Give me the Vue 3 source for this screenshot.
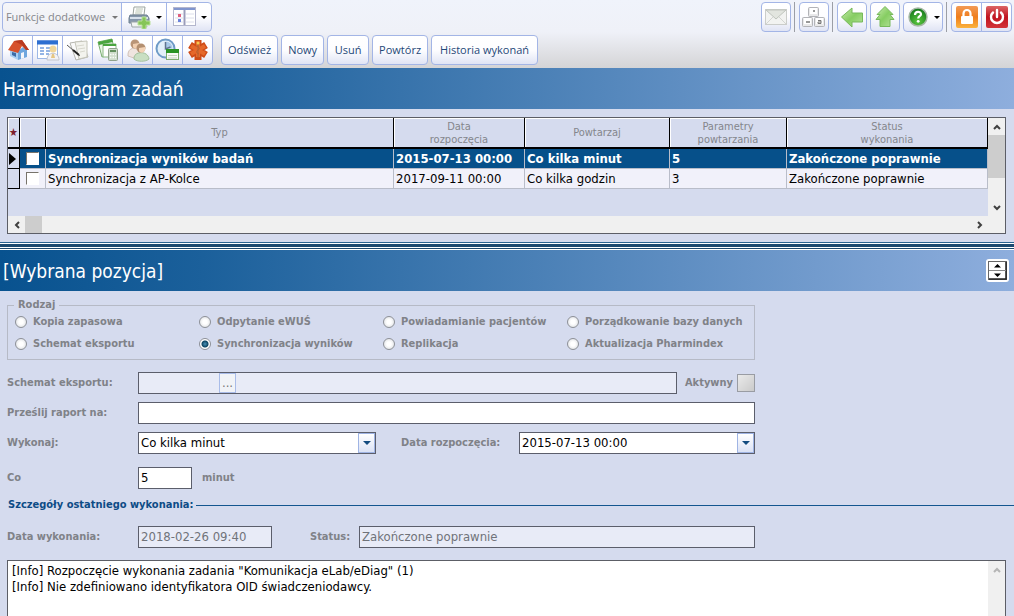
<script setup>
import { ref } from 'vue'

const actions = ['Odśwież', 'Nowy', 'Usuń', 'Powtórz', 'Historia wykonań']

const tasks = ref([
  { type: 'Synchronizacja wyników badań', start: '2015-07-13 00:00', repeat: 'Co kilka minut', params: '5', status: 'Zakończone poprawnie', checked: false },
  { type: 'Synchronizacja z AP-Kolce', start: '2017-09-11 00:00', repeat: 'Co kilka godzin', params: '3', status: 'Zakończone poprawnie', checked: false },
])
const current = ref(0)

const kinds = [
  'Kopia zapasowa', 'Odpytanie eWUŚ', 'Powiadamianie pacjentów', 'Porządkowanie bazy danych',
  'Schemat eksportu', 'Synchronizacja wyników', 'Replikacja', 'Aktualizacja Pharmindex',
]
const kind = ref('Synchronizacja wyników')

const scheme = ref('')
const schemeName = ref('')
const active = ref(false)
const report = ref('')
const interval = ref('Co kilka minut')
const startDate = ref('2015-07-13 00:00')
const every = ref('5')
const runDate = ref('2018-02-26 09:40')
const runStatus = ref('Zakończone poprawnie')
const log = ref('[Info] Rozpoczęcie wykonania zadania "Komunikacja eLab/eDiag" (1)\n[Info] Nie zdefiniowano identyfikatora OID świadczeniodawcy.')
</script>

<template>
  <div class="app">
    <header class="toolbar">
      <div class="bar">
        <div class="group">
          <button class="tool extra" type="button">Funkcje dodatkowe <i class="caret dim"></i></button>
          <button class="tool split" type="button" aria-label="Drukuj">
            <svg width="24" height="24" viewBox="0 0 24 24">
              <path d="M7 2h11l-1 8H6z" fill="#fff" stroke="#9aa39d" />
              <path d="M9 4h7M8.500 6h7M8 8h7" stroke="#b9c4b2" />
              <path d="M3 10h17l2 3v5H2v-5z" fill="#8798ab" stroke="#6f8092" />
              <path d="M3 13h18" stroke="#d8e1ec" stroke-width="2" />
              <path d="M4 17h14l2 5H5z" fill="#f2f4f3" stroke="#9ba5a8" />
              <path d="M15 12h4v4h4v4h-4v4h-4v-4h-4v-4h4z" fill="#86c559" stroke="#b9e29a" />
            </svg>
            <i class="caret"></i>
          </button>
          <button class="tool split" type="button" aria-label="Układ okna">
            <svg width="24" height="24" viewBox="0 0 24 24">
              <rect x="1.500" y="2.500" width="22" height="18" fill="#fff" stroke="#b3b6cd" />
              <path d="M2 4h21" stroke="#8095ce" stroke-width="2" />
              <path d="M12.500 5v15" stroke="#9a9cba" stroke-width="2" />
              <path d="M3 9h8M3 13h8M3 17h8M14 9h8M14 13h8M14 17h8" stroke="#dcdeeb" />
              <rect x="6" y="9" width="3" height="3" fill="#e0607e" />
              <rect x="6" y="14" width="3" height="3" fill="#6b83dc" />
            </svg>
            <i class="caret"></i>
          </button>
        </div>
        <div class="right">
          <button class="tool single" type="button" aria-label="Wiadomości">
            <svg width="24" height="24" viewBox="0 0 24 24">
              <rect x="1.500" y="4.500" width="21" height="15" fill="#f2f3f1" stroke="#cbcdca" />
              <path d="M2 19l7-7M22 19l-7-7" stroke="#d3d5d1" />
              <path d="M2 5l10 9L22 5z" fill="#e2e5df" stroke="#bfc4bd" />
            </svg>
          </button>
          <i class="sep"></i>
          <button class="tool single" type="button" aria-label="Klawiatura">
            <svg width="26" height="24" viewBox="0 0 26 24">
              <g fill="#e9e9ea" stroke="#b2b3b7">
                <rect x="7.500" y="2.500" width="10" height="9" rx="1" />
                <rect x="1.500" y="12.500" width="10" height="9" rx="1" />
                <rect x="13.500" y="12.500" width="10" height="9" rx="1" />
              </g>
              <g fill="#fff"><rect x="9" y="3" width="7" height="6" /><rect x="3" y="13" width="7" height="6" /><rect x="15" y="13" width="7" height="6" /></g>
              <path d="M12 6h2M5 17h4" stroke="#777" stroke-width="1.500" />
              <path d="M17 15.500h3v3h-3v-1.500h3" fill="none" stroke="#777" />
            </svg>
          </button>
          <i class="sep"></i>
          <button class="tool single gap" type="button" aria-label="Wstecz">
            <svg width="24" height="24" viewBox="0 0 24 24">
              <defs><linearGradient id="leaf" x1="0" y1="0" x2="1" y2="1"><stop offset="0" stop-color="#c9ecb0" /><stop offset=".5" stop-color="#86cd62" /><stop offset="1" stop-color="#b6e39b" /></linearGradient></defs>
              <path d="M1.500 12L12 3v5h10.500v9H12v5z" fill="url(#leaf)" stroke="#77b95b" />
            </svg>
          </button>
          <button class="tool single gap" type="button" aria-label="W górę">
            <svg width="24" height="24" viewBox="0 0 24 24">
              <path d="M12 1.500L20 9.500h-3l4 5h-4v7H7v-7H3l4-5H4z" fill="url(#leaf)" stroke="#77b95b" />
            </svg>
          </button>
          <button class="tool help" type="button" aria-label="Pomoc">
            <svg width="22" height="24" viewBox="0 0 22 24">
              <defs><radialGradient id="ball" cx=".5" cy=".75" r=".7"><stop offset="0" stop-color="#5cc83f" /><stop offset="1" stop-color="#167a1c" /></radialGradient></defs>
              <circle cx="11" cy="12" r="9" fill="url(#ball)" stroke="#a7b8a6" stroke-width="1.500" />
              <path d="M8 10c0-4 6-4 6-.8 0 2-2.800 2.100-2.800 4.300" fill="none" stroke="#fff" stroke-width="2.200" />
              <circle cx="11.200" cy="16.300" r="1.400" fill="#fff" />
            </svg>
            <i class="caret"></i>
          </button>
          <i class="sep"></i>
          <div class="group">
            <button class="tool cell" type="button" aria-label="Zablokuj">
              <svg width="24" height="24" viewBox="0 0 24 24">
                <defs><linearGradient id="amber" x1="0" y1="0" x2="0" y2="1"><stop offset="0" stop-color="#f29a55" /><stop offset=".5" stop-color="#ef7d1c" /><stop offset="1" stop-color="#fbb33e" /></linearGradient></defs>
                <rect x="1" y="1" width="22" height="22" rx="2" fill="url(#amber)" />
                <path d="M8.500 11V8.500a3.500 3.500 0 0 1 7 0V11" fill="none" stroke="#fff" stroke-width="2.200" />
                <rect x="6" y="11" width="12" height="8" rx="1" fill="#fff" />
              </svg>
            </button>
            <button class="tool cell" type="button" aria-label="Zakończ">
              <svg width="24" height="24" viewBox="0 0 24 24">
                <defs><linearGradient id="ruby" x1="0" y1="0" x2="0" y2="1"><stop offset="0" stop-color="#dc6565" /><stop offset=".5" stop-color="#c01420" /><stop offset="1" stop-color="#d3343a" /></linearGradient></defs>
                <rect x="1" y="1" width="22" height="22" rx="2" fill="url(#ruby)" />
                <path d="M8 7.500a6 6 0 1 0 8 0" fill="none" stroke="#fff" stroke-width="2.400" stroke-linecap="round" />
                <path d="M12 5v7" stroke="#fff" stroke-width="2.400" stroke-linecap="round" />
              </svg>
            </button>
          </div>
        </div>
      </div>

      <div class="bar">
        <div class="group">
          <button class="tool cell" type="button" aria-label="Start">
            <svg width="24" height="24" viewBox="0 0 24 24">
              <path d="M4 11l8 2v9l-8-4z" fill="#a8cff3" />
              <path d="M12 13l5-4 4 3v7l-9 3z" fill="#6ea6de" />
              <path d="M15 15l3-1v6l-3 1z" fill="#f4f6fb" />
              <path d="M6 14l4 1v4l-4-2z" fill="#3c6ba8" />
              <path d="M8 3l8-1 7 10h-3l-4-4-4 7L2 12z" fill="#d6512c" />
              <path d="M8 3l8-1 7 10h-3l-4-5z" fill="#b93a20" />
            </svg>
          </button>
          <button class="tool cell" type="button" aria-label="Terminarz">
            <svg width="24" height="24" viewBox="0 0 24 24">
              <rect x="1.500" y="2.500" width="20" height="18" fill="#fff" stroke="#9db8e6" />
              <path d="M1 4.500h21" stroke="#2d6fd1" stroke-width="4" />
              <path d="M4 10h4M10 10h4M4 13h4M10 13h4M4 16h4M10 16h3" stroke="#739ddd" stroke-width="1.500" />
              <circle cx="17" cy="11" r="3.500" fill="#f0d69a" />
              <path d="M11 22c0-9 12-9 12 0z" fill="#f2f2f5" stroke="#c3c5cc" />
              <path d="M16 16h2l1 4h-4z" fill="#e6c683" />
            </svg>
          </button>
          <button class="tool cell" type="button" aria-label="Notatki">
            <svg width="24" height="24" viewBox="0 0 24 24">
              <path d="M4 5l12-2 6 16-12 3z" fill="#fafafa" stroke="#b5b5ae" />
              <path d="M9 4l12-1v16l-8 2z" fill="#f3f3ee" stroke="#c4c4b9" />
              <path d="M11 8l7-1M12 11l7-1M14 14l5-1" stroke="#d7d7cd" />
              <path d="M1 7l13 11" stroke="#555" />
              <path d="M7 12l6 5" stroke="#222" stroke-width="2" fill="none" />
            </svg>
          </button>
          <button class="tool cell" type="button" aria-label="Rozliczenia">
            <svg width="24" height="24" viewBox="0 0 24 24">
              <path d="M2 4l14-3 3 15-13 3z" fill="#eaf5e6" stroke="#79ad70" />
              <path d="M2 4l14-3 1 3-14 3z" fill="#4aa53f" />
              <path d="M7 6h13v13H7z" fill="#fff" stroke="#88b981" />
              <path d="M7 7h13" stroke="#4aa53f" stroke-width="2" />
              <rect x="12.500" y="10.500" width="9" height="12" rx="1" fill="#cfdccb" stroke="#8fa18a" />
              <path d="M14 13h6" stroke="#638f5d" stroke-width="2" />
              <path d="M14 16.500h6M14 19.500h6" stroke="#f8fbf7" stroke-width="1.500" stroke-dasharray="1.500 1" />
            </svg>
          </button>
          <button class="tool cell" type="button" aria-label="Pacjenci">
            <svg width="24" height="24" viewBox="0 0 24 24">
              <path d="M2 18c-1-10 11-10 12-2l-3 5z" fill="#efe5df" stroke="#d1c2ba" />
              <path d="M8 21c-1-8 14-9 15 0-3 3-12 3-15 0z" fill="#c9dfc3" stroke="#a3c09c" />
              <circle cx="9" cy="6" r="4.500" fill="#b99577" />
              <path d="M7 6l6-1c1 6-4 7-6 4z" fill="#f1cfb0" />
              <circle cx="15" cy="10" r="4.500" fill="#b38f70" />
              <path d="M13 10l6-1c1 6-4 7-6 4z" fill="#f3d3b6" />
            </svg>
          </button>
          <button class="tool cell" type="button" aria-label="Harmonogram">
            <svg width="26" height="24" viewBox="0 0 26 24">
              <circle cx="10.500" cy="10.500" r="9" fill="#e2eff9" stroke="#6f9bc7" stroke-width="2" />
              <path d="M10.500 10.500V3.500a7 7 0 0 1 7 7z" fill="#a9c9e9" />
              <path d="M10.500 4v7l5-2" fill="none" stroke="#60748e" stroke-width="1.500" />
              <rect x="11.500" y="11.500" width="12" height="10" fill="#f7faf5" stroke="#7eac71" />
              <path d="M11 13h13" stroke="#299324" stroke-width="4" />
              <path d="M13 17.500h9M13 20h9" stroke="#c6d1c2" />
            </svg>
          </button>
          <button class="tool cell" type="button" aria-label="Ratownictwo">
            <svg width="24" height="24" viewBox="0 0 24 24">
              <g stroke="#cf4b16" stroke-width="7"><path d="M12 2v20M4 7l16 10M20 7L4 17" /></g>
              <g stroke="#e5682a" stroke-width="4"><path d="M12 3v16M5 8l14 8M19 8L5 16" /></g>
              <path d="M12 5v15M10 8c4 1 4 3 2 4s-2 3 1 4" fill="none" stroke="#b5602f" />
              <circle cx="12" cy="5" r="1.500" fill="#f7c64d" />
            </svg>
          </button>
        </div>
        <nav class="actions">
          <button v-for="a in actions" :key="a" class="tool action" type="button">{{ a }}</button>
        </nav>
      </div>
    </header>

    <h1 class="title">Harmonogram zadań</h1>

    <section class="list">
      <div class="frame">
        <div class="pane">
          <div class="viewport">
            <table class="grid">
              <colgroup>
                <col class="c-mark"><col class="c-check"><col><col class="c-date"><col class="c-repeat"><col class="c-param"><col class="c-status">
              </colgroup>
              <thead>
                <tr>
                  <th class="star">★</th>
                  <th></th>
                  <th>Typ</th>
                  <th>Data<br>rozpoczęcia</th>
                  <th>Powtarzaj</th>
                  <th>Parametry<br>powtarzania</th>
                  <th>Status<br>wykonania</th>
                </tr>
              </thead>
              <tbody>
                <tr v-for="(t, i) in tasks" :key="t.type" :class="{ selected: i === current }" @click="current = i">
                  <td class="mark"><i v-if="i === current" class="pointer"></i></td>
                  <td class="pick"><input v-model="t.checked" type="checkbox" :aria-label="t.type"></td>
                  <td>{{ t.type }}</td>
                  <td>{{ t.start }}</td>
                  <td>{{ t.repeat }}</td>
                  <td>{{ t.params }}</td>
                  <td>{{ t.status }}</td>
                </tr>
              </tbody>
            </table>
          </div>
          <div class="vscroll">
            <button type="button" aria-label="Przewiń w górę"><svg width="8" height="6" viewBox="0 0 8 6"><path d="M1 5l3-3 3 3" /></svg></button>
            <span class="thumb"></span>
            <button type="button" aria-label="Przewiń w dół"><svg width="8" height="6" viewBox="0 0 8 6"><path d="M1 1l3 3 3-3" /></svg></button>
          </div>
        </div>
        <div class="hscroll">
          <button type="button" aria-label="Przewiń w lewo"><svg width="6" height="8" viewBox="0 0 6 8"><path d="M5 1L2 4l3 3" /></svg></button>
          <span class="thumb"></span>
          <button type="button" aria-label="Przewiń w prawo"><svg width="6" height="8" viewBox="0 0 6 8"><path d="M1 1l3 3-3 3" /></svg></button>
        </div>
      </div>
    </section>

    <div class="splitter"></div>

    <div class="title">
      <h2>[Wybrana pozycja]</h2>
      <button class="resize" type="button" aria-label="Zmień wysokość panelu">
        <svg width="19" height="19" viewBox="0 0 19 19">
          <rect x=".5" y=".5" width="18" height="18" fill="#fff" stroke="#666" />
          <path d="M1 18h17V1" fill="none" stroke="#222" stroke-width="1.500" />
          <path d="M1 9.500h17" stroke="#888" />
          <path d="M6 6.500l3.500-3.500L13 6.500zM6 12.500l3.500 3.500 3.500-3.500z" fill="#000" />
        </svg>
      </button>
    </div>

    <form class="details" @submit.prevent>
      <div class="fields">
        <fieldset class="kinds">
          <legend>Rodzaj</legend>
          <label v-for="k in kinds" :key="k"><input v-model="kind" type="radio" name="kind" :value="k">{{ k }}</label>
        </fieldset>

        <div class="row">
          <label class="name" for="scheme">Schemat eksportu:</label>
          <div class="box shaded grow">
            <input id="scheme" v-model="scheme" class="code" type="text">
            <button class="more" type="button" aria-label="Wybierz schemat">...</button>
            <input v-model="schemeName" class="grow" type="text" aria-label="Nazwa schematu" readonly>
          </div>
          <label class="active" for="active">Aktywny</label>
          <input id="active" v-model="active" class="toggle" type="checkbox">
        </div>

        <div class="row">
          <label class="name" for="report">Prześlij raport na:</label>
          <div class="box grow"><input id="report" v-model="report" class="grow" type="text"></div>
        </div>

        <div class="row">
          <label class="name" for="interval">Wykonaj:</label>
          <div class="box combo">
            <select id="interval" v-model="interval" class="grow">
              <option>Co kilka minut</option>
              <option>Co kilka godzin</option>
            </select>
            <span class="arrow"></span>
          </div>
          <label class="start" for="start">Data rozpoczęcia:</label>
          <div class="box grow">
            <input id="start" v-model="startDate" class="grow" type="text">
            <button class="arrow" type="button" aria-label="Wybierz datę"></button>
          </div>
        </div>

        <div class="row every">
          <label class="name" for="every">Co</label>
          <div class="box short"><input id="every" v-model="every" class="grow" type="text"></div>
          <span class="unit">minut</span>
        </div>
      </div>

      <h3 class="section">Szczegóły ostatniego wykonania:</h3>

      <div class="fields">
        <div class="row last">
          <label class="name" for="run">Data wykonania:</label>
          <div class="box shaded date"><input id="run" v-model="runDate" class="grow" type="text" readonly></div>
          <label class="state" for="state">Status:</label>
          <div class="box shaded grow"><input id="state" v-model="runStatus" class="grow" type="text" readonly></div>
        </div>
      </div>

      <div class="log">
        <textarea v-model="log" aria-label="Dziennik wykonania" readonly></textarea>
        <div class="vscroll idle">
          <button type="button" aria-label="Przewiń dziennik w górę"><svg width="8" height="6" viewBox="0 0 8 6"><path d="M1 5l3-3 3 3" /></svg></button>
        </div>
      </div>
    </form>
  </div>
</template>

<style>
body { margin: 0; }
</style>

<style scoped>
* { box-sizing: border-box; }
.app {
  display: flex;
  flex-direction: column;
  height: 100vh;
  overflow: hidden;
  background: #d5dbee;
  color: #000;
  font: 13px/16px "DejaVu Sans Condensed", "DejaVu Sans", sans-serif;
}
button, input, select, textarea { font: inherit; color: inherit; margin: 0; }
button { padding: 0; }
svg { display: block; flex: none; }

.toolbar {
  display: flex;
  flex-direction: column;
  flex: none;
  gap: 3px;
  padding: 2px 2px 3px 2px;
  background: linear-gradient(#f0f3fb 0, #eff1f8 32px, #d4d4d6 100%);
  font: 11px/16px "Open Sans", "Noto Sans", sans-serif;
}
.bar { display: flex; }
.right { display: flex; margin-left: auto; }
.group { display: flex; }
.tool {
  display: flex;
  align-items: center;
  justify-content: center;
  height: 30px;
  border: 1px solid #a3b5e6;
  border-radius: 4px;
  background: linear-gradient(#fff 0, #fdfdff 50%, #e0e4f4 100%);
  color: #1f4878;
}
.group .tool { border-radius: 0; width: 46px; margin-right: -1px; }
.group .tool.cell { width: 31px; }
.group .tool:first-child { border-radius: 4px 0 0 4px; }
.group .tool:last-child { border-radius: 0 4px 4px 0; margin-right: 0; }
.group .tool.extra { width: 120px; gap: 7px; color: #85878c; background: linear-gradient(#f5f6f9, #eeeff4); }
.tool.split, .tool.help { gap: 5px; }
.tool.single { width: 30px; }
.tool.gap { margin-right: 3px; }
.tool.help { width: 40px; }
.caret { border: 3px solid transparent; border-top-color: #000; border-bottom: 0; }
.caret.dim { border-top-color: #777; }
.sep { width: 1px; margin: 0 4px 0 3px; background: #9b9ea6; }
.actions { display: flex; gap: 3px; margin-left: 8px; }
.action { min-width: 42px; padding: 0 6px; }
.action:last-child { padding: 0 8px; }

.title {
  display: flex;
  align-items: center;
  flex: none;
  height: 41px;
  margin: 0;
  padding: 0 5px 0 3px;
  background: linear-gradient(90deg, #08528f 0, #1b609b 20%, #8eaedd 100%);
  color: #fff;
  font-size: 19px;
  font-weight: normal;
}
.title h2 { margin: 0; font: inherit; }
.resize {
  display: grid;
  place-items: center;
  width: 23px;
  height: 23px;
  margin-left: auto;
  border: 0;
  border-radius: 3px;
  background: #fff;
}

.list { flex: none; padding: 8px 8px 8px 7px; }
.frame { border: 1px solid #5c5e66; }
.pane { display: flex; height: 98px; }
.viewport { flex: 1; min-width: 0; }
.grid { width: 100%; border-collapse: separate; border-spacing: 0; table-layout: fixed; }
.c-mark { width: 12px; }
.c-check { width: 26px; }
.c-date { width: 131px; }
.c-repeat { width: 145px; }
.c-param { width: 117px; }
.c-status { width: 201px; }
.grid th {
  height: 31px;
  padding: 0;
  border-right: 1px solid #000;
  border-bottom: 2px solid #000;
  box-shadow: inset 1px 1px #fff;
  color: #84868c;
  font-size: 11px;
  font-weight: normal;
  line-height: 13px;
}
.grid th.star { color: #7d1d2c; }
.grid td {
  height: 20px;
  padding: 0 2px;
  border-right: 1px solid #b9bdc9;
  border-bottom: 1px solid #b9bdc9;
  background: #f1f1fa;
  line-height: 16px;
  white-space: nowrap;
}
.grid .selected td { background: #06508a; color: #fff; font-weight: bold; }
.grid .mark, .grid .selected .mark {
  padding: 0 1px;
  border-right: 1px solid #000;
  border-bottom: 1px solid #000;
  background: #d5dbee;
}
.pointer { display: block; width: 0; border: 6px solid transparent; border-left: 7px solid #000; border-right: 0; }
.pick input {
  display: block;
  width: 13px;
  height: 13px;
  margin: 0 auto;
  appearance: none;
  border: 1px solid;
  border-color: #77736b #fff #fff #77736b;
  background: #fff;
}
.vscroll {
  display: flex;
  flex-direction: column;
  width: 17px;
  background: #f0f0f0;
}
.vscroll button, .hscroll button { display: grid; place-items: center; width: 17px; height: 17px; border: 0; background: none; }
.vscroll path, .hscroll path { fill: none; stroke: #404040; stroke-width: 2; }
.vscroll .thumb { height: 43px; margin-bottom: auto; background: #cdcdcd; }
.hscroll { display: flex; height: 17px; padding-right: 17px; background: #f0f0f0; }
.hscroll .thumb { width: 17px; margin-right: auto; background: #cdcdcd; }

.splitter {
  flex: none;
  height: 8px;
  background: linear-gradient(#2b6492 0 1px, #fff 1px 2px, #1d4a70 2px 5px, #fff 5px 6px, #1d4a70 6px 7px, #fff 7px 8px);
}

.details { display: flex; flex-direction: column; flex: 1; min-height: 0; color: #808288; font-size: 11px; font-weight: bold; }
.fields { max-width: 755px; padding-left: 7px; }
.kinds {
  display: grid;
  grid-template-columns: repeat(4, 184px);
  row-gap: 6px;
  margin: 6px 0 12px;
  padding: 1px 0 7px 7px;
  border: 1px solid #b6bac6;
}
.kinds legend { margin-left: -1px; padding: 0 4px; }
.kinds label { display: flex; align-items: center; gap: 6px; }
.kinds input {
  width: 12px;
  height: 12px;
  appearance: none;
  border: 1px solid #8d9097;
  border-radius: 50%;
  background: radial-gradient(#fff 30%, #d5d8dc);
}
.kinds input:checked { background: radial-gradient(#4a93b8 0, #0d4563 3px, #fff 4px); }

.row { display: flex; align-items: center; margin-bottom: 8px; }
.row.every { margin-top: 13px; }
.name { width: 131px; }
.box {
  position: relative;
  display: flex;
  height: 22px;
  border: 1px solid #5b5e6b;
  background: #fff;
  color: #000;
  font-size: 13px;
  font-weight: normal;
}
.box.shaded { background: #e8ebf7; color: #70737a; }
.box input, .box select { min-width: 0; padding: 0 2px; border: 0; background: none; appearance: none; outline: 0; }
.grow { flex: 1; }
.box .code { width: 80px; }
.more { width: 17px; border: 1px solid #a9bce9; background: #f1f3f7; color: #777; line-height: 12px; }
.active { margin-left: 8px; }
.toggle {
  width: 18px;
  height: 18px;
  margin-left: 4px;
  appearance: none;
  border: 1px solid #999ca3;
  background: linear-gradient(135deg, #eaeaea, #cacaca);
}
.combo { width: 238px; }
.combo .arrow { position: absolute; right: 0; top: 0; height: 20px; pointer-events: none; }
.arrow {
  display: grid;
  place-items: center;
  width: 17px;
  border: 1px solid #9fb4e4;
  background: linear-gradient(#fff, #dbe2f5);
}
.arrow::after { content: ""; border: 4px solid transparent; border-top-color: #124b80; border-bottom: 0; }
.start { width: 118px; margin-left: 25px; }
.short { width: 54px; }
.unit { margin-left: 10px; }
.section {
  display: flex;
  align-items: center;
  gap: 3px;
  margin: 0;
  padding-left: 8px;
  color: #0d4c86;
  font-size: 11px;
}
.section::after { content: ""; flex: 1; height: 1px; background: #14568f; }
.last { margin: 13px 0 12px; }
.date { width: 134px; }
.state { width: 49px; margin-left: 38px; }
.log {
  display: flex;
  flex: 1;
  min-height: 0;
  margin: 0 8px 0 7px;
  border: 1px solid #5c5e66;
  border-bottom: 0;
  background: #fff;
}
.log textarea {
  flex: 1;
  padding: 2px 4px;
  border: 0;
  background: none;
  color: #000;
  font-size: 13px;
  font-weight: normal;
  line-height: 16px;
  outline: 0;
  resize: none;
}
.idle path { stroke: #b5b5b5; }
</style>
